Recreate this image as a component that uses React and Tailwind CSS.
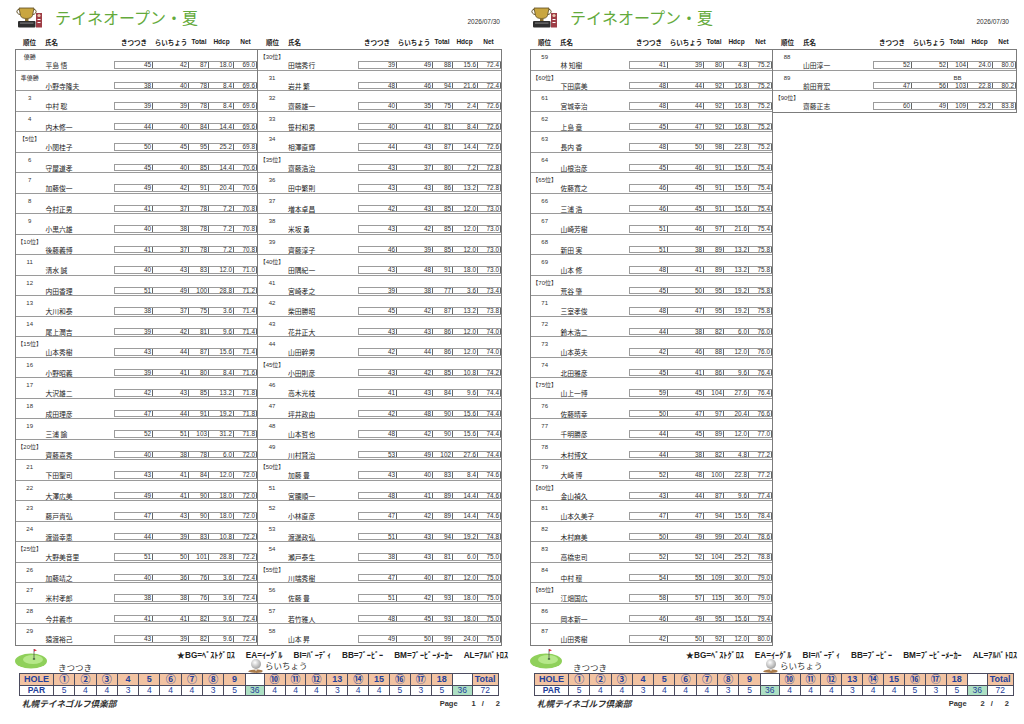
const P1A = `優勝|平島 悟|45|42|87|18.0|69.0
準優勝|小野寺隆夫|38|40|78|8.4|69.6
3|中村 聡|39|39|78|8.4|69.6
4|内木修一|44|40|84|14.4|69.6
【5位】|小関桂子|50|45|95|25.2|69.8
6|守屋道孝|45|40|85|14.4|70.6
7|加藤俊一|49|42|91|20.4|70.6
8|今村正男|41|37|78|7.2|70.8
9|小黒六雄|40|38|78|7.2|70.8
【10位】|後藤義博|41|37|78|7.2|70.8
11|清水 誠|40|43|83|12.0|71.0
12|内田香理|51|49|100|28.8|71.2
13|大川和泰|38|37|75|3.6|71.4
14|尾上潤吉|39|42|81|9.6|71.4
【15位】|山本秀樹|43|44|87|15.6|71.4
16|小野昭義|39|41|80|8.4|71.6
17|大沢雄二|42|43|85|13.2|71.8
18|成田理彦|47|44|91|19.2|71.8
19|三浦 諭|52|51|103|31.2|71.8
【20位】|齊藤嘉秀|40|38|78|6.0|72.0
21|下田聖司|43|41|84|12.0|72.0
22|大澤広美|49|41|90|18.0|72.0
23|藤戸貴弘|47|43|90|18.0|72.0
24|渡邉幸恵|44|39|83|10.8|72.2
【25位】|大野美音里|51|50|101|28.8|72.2
26|加藤靖之|40|36|76|3.6|72.4
27|米村孝郎|38|38|76|3.6|72.4
28|今井義市|41|41|82|9.6|72.4
29|猿渡裕己|43|39|82|9.6|72.4`;

const P1B = `【30位】|田端秀行|39|49|88|15.6|72.4
31|岩井 繁|48|46|94|21.6|72.4
32|齋藤雄一|40|35|75|2.4|72.6
33|笹村和男|40|41|81|8.4|72.6
34|相澤直輝|44|43|87|14.4|72.6
【35位】|齋藤浩治|43|37|80|7.2|72.8
36|田中繁則|43|43|86|13.2|72.8
37|増本卓昌|42|43|85|12.0|73.0
38|米坂 勇|43|42|85|12.0|73.0
39|齊藤淳子|46|39|85|12.0|73.0
【40位】|田隅紀一|43|48|91|18.0|73.0
41|宮崎孝之|39|38|77|3.6|73.4
42|柴田勝昭|45|42|87|13.2|73.8
43|花井正大|43|43|86|12.0|74.0
44|山田幹男|42|44|86|12.0|74.0
【45位】|小田則彦|43|42|85|10.8|74.2
46|高木光枝|41|43|84|9.6|74.4
47|坪井政由|42|48|90|15.6|74.4
48|山本哲也|48|42|90|15.6|74.4
49|川村賢治|53|49|102|27.6|74.4
【50位】|加藤 豊|43|40|83|8.4|74.6
51|宮腰順一|48|41|89|14.4|74.6
52|小林直彦|47|42|89|14.4|74.6
53|渡邊政弘|51|43|94|19.2|74.8
54|瀬戸泰生|38|43|81|6.0|75.0
【55位】|川端秀樹|47|40|87|12.0|75.0
56|佐藤 豊|51|42|93|18.0|75.0
57|若竹雅人|48|45|93|18.0|75.0
58|山本 昇|49|50|99|24.0|75.0`;

const P2A = `59|林 知樹|41|39|80|4.8|75.2
【60位】|下田廣美|48|44|92|16.8|75.2
61|宮城幸治|48|44|92|16.8|75.2
62|上島 章|45|47|92|16.8|75.2
63|長内 香|48|50|98|22.8|75.2
64|山根治彦|45|46|91|15.6|75.4
【65位】|佐藤寛之|46|45|91|15.6|75.4
66|三浦 浩|46|45|91|15.6|75.4
67|山崎芳樹|51|46|97|21.6|75.4
68|新田 実|51|38|89|13.2|75.8
69|山本 修|48|41|89|13.2|75.8
【70位】|荒谷 肇|45|50|95|19.2|75.8
71|三室孝俊|48|47|95|19.2|75.8
72|鈴木浩二|44|38|82|6.0|76.0
73|山本英夫|42|46|88|12.0|76.0
74|北田雅彦|45|41|86|9.6|76.4
【75位】|山上一博|59|45|104|27.6|76.4
76|佐藤晴幸|50|47|97|20.4|76.6
77|千明勝彦|44|45|89|12.0|77.0
78|木村博文|44|38|82|4.8|77.2
79|大崎 博|52|48|100|22.8|77.2
【80位】|金山禎久|43|44|87|9.6|77.4
81|山本久美子|47|47|94|15.6|78.4
82|木村麻美|50|49|99|20.4|78.6
83|高橋忠司|52|52|104|25.2|78.8
84|中村 穣|54|55|109|30.0|79.0
【85位】|江畑国広|58|57|115|36.0|79.0
86|岡本新一|46|49|95|15.6|79.4
87|山田秀樹|42|50|92|12.0|80.0`;

const P2B = `88|山田淳一|52|52|104|24.0|80.0
89|前田育宏|47|56|103|22.8|80.2|BB
【90位】|齋藤正志|60|49|109|25.2|83.8`;

const parse = (s) => s.split("\n").map((l) => l.split("|"));

const JP = "font-['Noto_Sans_CJK_JP',sans-serif]";
const NUM = "font-['Liberation_Sans','Noto_Sans_CJK_JP',sans-serif]";

const BOX_W = ["w-[38px]", "w-[36px]", "w-[20px]", "w-[25px]", "w-[23px]"];
const HEADS = ["きつつき", "らいちょう", "Total", "Hdcp", "Net"];

const OUT_HOLES = ["①", "②", "③", "4", "5", "⑥", "⑦", "⑧", "9"];
const OUT_PAR = [5, 4, 4, 3, 4, 4, 4, 3, 5];
const IN_HOLES = ["⑩", "⑪", "⑫", "13", "⑭", "15", "⑯", "⑰", "18"];
const IN_PAR = [4, 4, 4, 3, 4, 4, 5, 3, 5];

function Trophy() {
  return (
    <svg width="28" height="21" viewBox="0 0 28 21">
      <path d="M4 1h15l-1.5 7.5c-.6 2-2.4 3-6 3s-5.4-1-6-3z" fill="#c9a640" stroke="#5a4a20" strokeWidth="0.8" />
      <path d="M4 2.5c-3 0-3 4.5 1.2 5M19 2.5c3 0 3 4.5-1.2 5" fill="none" stroke="#5a4a20" strokeWidth="1" />
      <rect x="10" y="11" width="3.5" height="3" fill="#8a7030" />
      <rect x="3" y="14" width="17.5" height="6.5" rx="1" fill="#2e2e2e" />
      <rect x="5" y="15.5" width="13.5" height="1.2" fill="#777" />
      <rect x="21" y="6" width="6" height="14.5" fill="#9e3d46" />
      <circle cx="24" cy="8.5" r="1.6" fill="#e8c9b0" />
      <rect x="22.5" y="12" width="3" height="1" fill="#fff" />
      <rect x="22.5" y="15" width="3" height="1" fill="#fff" />
    </svg>
  );
}

function GolfGreen() {
  return (
    <svg width="33" height="21" viewBox="0 0 33 21">
      <ellipse cx="16" cy="13" rx="16" ry="7.5" fill="#8fd05a" />
      <ellipse cx="18" cy="11.5" rx="10" ry="4.5" fill="#b6e88a" />
      <ellipse cx="19" cy="11" rx="1.3" ry="0.7" fill="#2e5a2e" />
      <line x1="19" y1="11" x2="19" y2="1" stroke="#444" strokeWidth="0.7" />
      <path d="M19 1l3 1.2-3 1.2z" fill="#d23" />
    </svg>
  );
}

function GolfBall() {
  return (
    <svg width="16" height="16" viewBox="0 0 16 16">
      <defs>
        <radialGradient id="ball" cx="0.4" cy="0.35" r="0.7">
          <stop offset="0" stopColor="#ffffff" />
          <stop offset="1" stopColor="#9a9a9a" />
        </radialGradient>
      </defs>
      <path d="M0 13.5c2-2 10-2.5 14-1.2 1 .4 .6 2-1 2.3-4 .6-10 .4-13-1.1z" fill="#a87a4a" />
      <path d="M7 10l2 0-.6 3h-.8z" fill="#e6e6e6" />
      <circle cx="8" cy="6" r="5" fill="url(#ball)" />
    </svg>
  );
}

function ColHead({ width }) {
  return (
    <div className={`flex ${width} text-[6.5px] font-bold leading-[8px] text-[#222]`}>
      <div className={`w-[28px] pl-[8px] ${JP}`}>順位</div>
      <div className={`w-[72px] pl-[2px] ${JP}`}>氏名</div>
      {HEADS.map((h, i) => (
        <div key={h} className={`${BOX_W[i]} text-center ${i < 2 ? JP : NUM}`}>
          {h}
        </div>
      ))}
    </div>
  );
}

function Row({ r }) {
  const [rank, name, ...rest] = r;
  const vals = rest.slice(0, 5);
  const note = rest[5];
  return (
    <div className="flex h-[20.5px] border-b border-[#9a9a9a] last:border-b-0">
      <div className={`w-[28px] pt-[4px] text-center text-[6px] leading-[7px] text-[#333] ${NUM}`}>{rank}</div>
      <div className={`w-[72px] pl-[2px] pt-[11px] text-[6.8px] leading-[8px] text-[#222] ${JP}`}>{name}</div>
      <div className="mt-[11px] flex h-[7.5px] border-y border-l border-[#9c9c9c]">
        {vals.map((v, i) => (
          <div
            key={i}
            className={`relative ${BOX_W[i]} border-r border-[#666] pr-[1px] text-right text-[6.4px] leading-[6px] text-[#333] ${NUM}`}
          >
            {v}
            {note && i === 2 ? (
              <span className="absolute -top-[8px] left-0 w-full text-center text-[6px] leading-[6px]">{note}</span>
            ) : null}
          </div>
        ))}
      </div>
    </div>
  );
}

function Cell({ w, children, bg = "bg-white" }) {
  return (
    <div className={`flex ${w} ${bg} items-center justify-center border-r border-b border-[#4b4b5e]`}>
      {children}
    </div>
  );
}

function HoleLabel({ h }) {
  const circled = !/^\d+$/.test(h);
  return circled ? <span className={`text-[10px] leading-none ${JP}`}>{h}</span> : <span>{h}</span>;
}

function HoleTable() {
  return (
    <div className={`ml-[19px] w-fit border-l border-t border-[#4b4b5e] font-bold text-[#23409a] ${NUM}`}>
      <div className="flex h-[11.5px] text-[9px] leading-[10px]">
        <Cell w="w-[34px]" bg="bg-[#f2c3a2]">HOLE</Cell>
        {OUT_HOLES.map((h) => (
          <Cell key={h} w="w-[21.3px]" bg="bg-[#f2c3a2]">
            <HoleLabel h={h} />
          </Cell>
        ))}
        <Cell w="w-[19px]" />
        {IN_HOLES.map((h) => (
          <Cell key={h} w="w-[20.9px]" bg="bg-[#f2c3a2]">
            <HoleLabel h={h} />
          </Cell>
        ))}
        <Cell w="w-[20px]" />
        <Cell w="w-[26px]" bg="bg-[#f2c3a2]">Total</Cell>
      </div>
      <div className="flex h-[10px] text-[8.5px] font-normal leading-[9px]">
        <Cell w="w-[34px]"><span className="font-bold">PAR</span></Cell>
        {OUT_PAR.map((p, i) => (
          <Cell key={i} w="w-[21.3px]">{p}</Cell>
        ))}
        <Cell w="w-[19px]" bg="bg-[#ade0c4]">36</Cell>
        {IN_PAR.map((p, i) => (
          <Cell key={i} w="w-[20.9px]">{p}</Cell>
        ))}
        <Cell w="w-[20px]" bg="bg-[#ade0c4]">36</Cell>
        <Cell w="w-[26px]">72</Cell>
      </div>
    </div>
  );
}

function Footer({ page }) {
  return (
    <div className="flex flex-col">
      <div className="flex h-[27.5px]">
        <div className="ml-[15px] mt-[2px]">
          <GolfGreen />
        </div>
        <div className="flex flex-1 flex-col">
          <div
            className={`mt-[4px] flex h-[12px] justify-end gap-[11px] pr-[7px] text-[8.2px] font-bold leading-[12px] text-[#222] ${NUM}`}
          >
            <span>★BG=ﾍﾞｽﾄｸﾞﾛｽ</span>
            <span>EA=ｲｰｸﾞﾙ</span>
            <span>BI=ﾊﾞｰﾃﾞｨ</span>
            <span>BB=ﾌﾞｰﾋﾞｰ</span>
            <span>BM=ﾌﾞｰﾋﾞｰﾒｰｶｰ</span>
            <span>AL=ｱﾙﾊﾞﾄﾛｽ</span>
          </div>
          <div className={`flex h-[11.5px] items-end text-[8.5px] leading-[11px] text-[#333] ${JP}`}>
            <span className="ml-[10px] w-[190px]">きつつき</span>
            <div className="-mb-[1px]">
              <GolfBall />
            </div>
            <span className="ml-[1px] pb-[2px]">らいちょう</span>
          </div>
        </div>
      </div>
      <HoleTable />
      <div className="flex h-[16px] items-center pr-[15px]">
        <span className={`ml-[22px] text-[8.6px] font-bold italic text-[#333] ${JP}`}>札幌テイネゴルフ倶楽部</span>
        <div className={`ml-auto flex items-center text-[7.5px] font-bold text-[#333] ${NUM}`}>
          <span className="mr-[14px]">Page</span>
          <span className="mr-[6px]">{page}</span>
          <span className="mr-[12px]">/</span>
          <span>2</span>
        </div>
      </div>
    </div>
  );
}

function Page({ left, right, page, className }) {
  return (
    <div className={`flex h-[724px] shrink-0 flex-col ${className}`}>
      <div className="flex h-[34px] items-start pl-[15px] pr-[15px]">
        <div className="mt-[7px]">
          <Trophy />
        </div>
        <div className={`ml-[12px] mt-[6px] text-[16px] leading-[23px] text-[#64aa3c] ${JP}`}>テイネオープン・夏</div>
        <div className={`ml-auto mt-[18px] text-[6.5px] leading-[8px] text-[#333] ${NUM}`}>2026/07/30</div>
      </div>
      <div className="flex h-[15px] items-center pl-[15px]">
        <ColHead width="w-[243px]" />
        <ColHead width="w-[244px]" />
      </div>
      <div className="flex h-[596.5px] items-start pl-[15px]">
        <div className="w-[243px] border border-[#7c7c7c]">
          {parse(left).map((r, i) => (
            <Row key={i} r={r} />
          ))}
        </div>
        <div className="w-[244px] border-y border-r border-[#7c7c7c]">
          {parse(right).map((r, i) => (
            <Row key={i} r={r} />
          ))}
        </div>
      </div>
      <Footer page={page} />
    </div>
  );
}

export default function App() {
  return (
    <div className="flex h-[724px] w-[1024px] overflow-hidden bg-white">
      <Page left={P1A} right={P1B} page="1" className="w-[515px]" />
      <Page left={P2A} right={P2B} page="2" className="w-[509px]" />
    </div>
  );
}
